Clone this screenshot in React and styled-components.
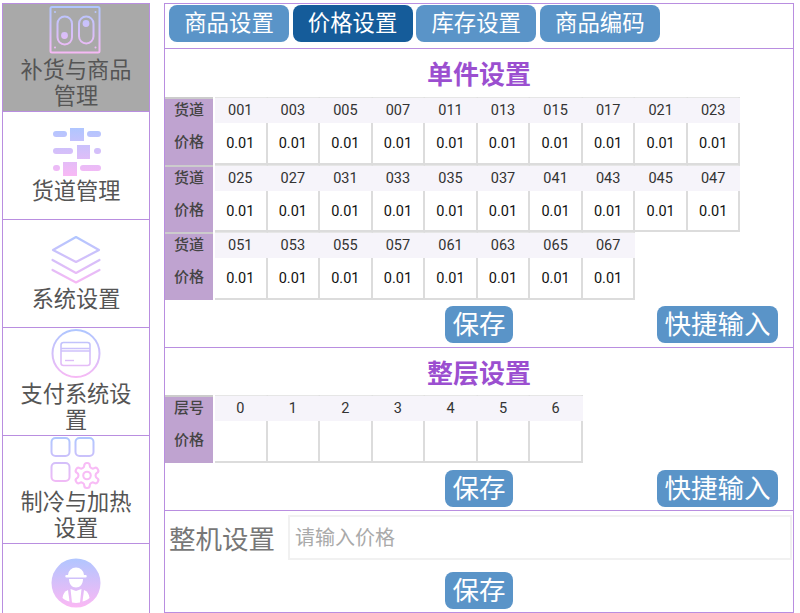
import styled, { createGlobalStyle } from 'styled-components';

const GlobalStyle = createGlobalStyle`
  html, body {
    margin: 0;
    padding: 0;
    height: 100%;
    overflow: hidden;
    background: #fff;
  }
  * {
    box-sizing: border-box;
  }
`;

const Page = styled.div`
  display: flex;
  align-items: flex-start;
  gap: 14px;
  height: 613px;
  overflow: hidden;
  padding: 3px 0 0 2px;
  font-family: Roboto, "Noto Sans CJK SC", sans-serif;
`;

const Sidebar = styled.div`
  flex: none;
  width: 148px;
  border: 1px solid #b98ee0;
`;

const NavItem = styled.div`
  height: 108px;
  display: flex;
  flex-direction: column;
  align-items: center;
  justify-content: center;
  border-bottom: 1px solid #b98ee0;
  background: ${(p) => (p.$active ? '#a9a9a9' : '#fff')};
`;

const NavIcon = styled.svg`
  flex: none;
  width: 50px;
  height: 50px;
  margin-bottom: ${(p) => p.$gap || 0}px;
  overflow: visible;
`;

const NavLabel = styled.div`
  width: 118px;
  font-size: 22.2px;
  line-height: 26px;
  text-align: center;
  color: #555;
`;

const Main = styled.div`
  flex: none;
  width: 630px;
  height: 610px;
  border: 1px solid #b98ee0;
`;

const Tabs = styled.div`
  display: flex;
  gap: 3.6px;
  height: 45px;
  padding: 1px 0 0 4px;
  border-bottom: 1px solid #b98ee0;
`;

const Tab = styled.div`
  width: 120px;
  height: 37px;
  border-radius: 8px;
  font-size: 22.4px;
  line-height: 37px;
  text-align: center;
  color: #fff;
  background: ${(p) => (p.$active ? '#155c9a' : '#5a94c8')};
`;

const Section = styled.div`
  height: ${(p) => p.$height}px;
  border-bottom: 1px solid #b98ee0;
`;

const Title = styled.div`
  height: ${(p) => p.$height}px;
  font-size: 26px;
  font-weight: 700;
  line-height: ${(p) => p.$line}px;
  text-align: center;
  color: #9b4fd0;
`;

const Row = styled.div`
  display: flex;
  height: 67.5px;
`;

const RowHead = styled.div`
  flex: none;
  width: 48px;
  margin-right: 2px;
  border-top: 2px solid #ccc;
  background: #bfa3d0;
  font-size: 15px;
  font-weight: 500;
  text-align: center;
  color: #444;
`;

const RowHeadLine = styled.div`
  height: ${(p) => p.$h}px;
  line-height: ${(p) => p.$h}px;
`;

const Cell = styled.div`
  flex: none;
  width: 52.55px;
  border-top: 1px solid #e6e6e6;
  border-right: 2px solid #dcdcdc;
  border-bottom: 2px solid #dcdcdc;
`;

const CellHead = styled.div`
  height: 25px;
  margin-right: -2px;
  padding-right: 2px;
  background: #f6f4fa;
  font-size: 14.5px;
  line-height: 26px;
  text-align: center;
  color: #333;
`;

const CellValue = styled.div`
  height: 39px;
  font-size: 14.5px;
  line-height: 41px;
  text-align: center;
  color: #111;
`;

const Actions = styled.div`
  display: grid;
  grid-template-columns: 1fr auto 1fr;
  align-items: center;
  padding-top: ${(p) => p.$top}px;
`;

const Button = styled.div`
  grid-column: ${(p) => p.$col};
  justify-self: ${(p) => (p.$col === 3 ? 'end' : 'center')};
  height: 37px;
  margin-right: ${(p) => (p.$col === 3 ? '15px' : '0')};
  padding: 0 7.5px;
  border-radius: 8px;
  font-size: 26.5px;
  line-height: 37px;
  color: #fff;
  background: #5a94c8;
`;

const WholeRow = styled.div`
  display: flex;
  align-items: center;
  height: 49px;
  padding: 4px 1px 0 4px;
`;

const WholeLabel = styled.div`
  flex: none;
  width: 119px;
  font-size: 26.5px;
  color: #777;
`;

const PriceInput = styled.input`
  flex: 1;
  min-width: 0;
  height: 45px;
  padding: 0 5px;
  border: 2px solid #f1f1f1;
  font-family: inherit;
  font-size: 20px;
  outline: none;
  &::placeholder {
    color: #aaa;
  }
`;

const channelRows = [
  ['001', '003', '005', '007', '011', '013', '015', '017', '021', '023'],
  ['025', '027', '031', '033', '035', '037', '041', '043', '045', '047'],
  ['051', '053', '055', '057', '061', '063', '065', '067'],
];

const layers = ['0', '1', '2', '3', '4', '5', '6'];

function GridRow({ head, items, value }) {
  return (
    <Row>
      <RowHead>
        <RowHeadLine $h={23}>{head}</RowHeadLine>
        <RowHeadLine $h={40}>价格</RowHeadLine>
      </RowHead>
      {items.map((item) => (
        <Cell key={item}>
          <CellHead>{item}</CellHead>
          <CellValue>{value}</CellValue>
        </Cell>
      ))}
    </Row>
  );
}

function IconGradient({ id }) {
  return (
    <defs>
      <linearGradient id={id} gradientUnits="userSpaceOnUse" x1="0" y1="0" x2="0" y2="50">
        <stop offset="0" stopColor="#b0c6ff" />
        <stop offset="1" stopColor="#fcb8f4" />
      </linearGradient>
    </defs>
  );
}

function SlotIcon() {
  return (
    <NavIcon viewBox="0 0 50 50" fill="none">
      <IconGradient id="g1" />
      <g stroke="url(#g1)" strokeWidth="2">
        <rect x="-0.5" y="0" width="49" height="45.5" rx="1.5" />
        <rect x="6.5" y="9.5" width="14.5" height="28" rx="7.2" />
        <rect x="28" y="9.5" width="14.5" height="27" rx="7.2" />
      </g>
      <g fill="url(#g1)">
        <circle cx="13.5" cy="28.5" r="3.4" />
        <circle cx="35" cy="16.5" r="3.4" />
        <circle cx="4" cy="5" r="1" />
        <circle cx="44.5" cy="5" r="1" />
        <circle cx="4" cy="40.5" r="1" />
        <circle cx="44.5" cy="40.5" r="1" />
      </g>
    </NavIcon>
  );
}

function ChannelIcon() {
  return (
    <NavIcon viewBox="0 0 50 50">
      <IconGradient id="g2" />
      <g fill="url(#g2)">
        <rect x="2" y="3" width="14" height="6" rx="3" />
        <rect x="19" y="0" width="14" height="13" />
        <rect x="36" y="3" width="14" height="6" rx="3" />
        <rect x="2" y="20" width="20" height="6" rx="3" />
        <rect x="26" y="17" width="13" height="14" />
        <rect x="43" y="20" width="7" height="6" rx="3" />
        <rect x="2" y="37" width="7" height="6" rx="3" />
        <rect x="12" y="34" width="14" height="14" />
        <rect x="29" y="37" width="21" height="6" rx="3" />
      </g>
    </NavIcon>
  );
}

function LayersIcon() {
  return (
    <NavIcon viewBox="0 0 50 50" fill="none">
      <IconGradient id="g3" />
      <g stroke="url(#g3)" strokeWidth="2.2" strokeLinejoin="round" strokeLinecap="round">
        <path d="M25 1 L48 14 L25 26 L2 14 Z" />
        <path d="M1.5 24 L25 37 L48.5 24" />
        <path d="M1.5 34 L25 46.5 L48.5 34" />
      </g>
    </NavIcon>
  );
}

function PayIcon() {
  return (
    <NavIcon viewBox="0 0 50 50" fill="none">
      <IconGradient id="g4" />
      <g stroke="url(#g4)">
        <circle cx="25" cy="22.5" r="23.5" strokeWidth="2" />
        <rect x="10" y="11.5" width="29" height="23" rx="2.5" strokeWidth="1.6" />
        <path d="M10 17.5 H39 M10 20 H39" strokeWidth="1.6" />
        <path d="M14 29.5 H23" strokeWidth="1.4" />
      </g>
    </NavIcon>
  );
}

function CoolIcon() {
  return (
    <NavIcon viewBox="0 0 50 50" fill="none">
      <IconGradient id="g5" />
      <g stroke="url(#g5)" strokeWidth="2">
        <rect x="0.5" y="-1" width="18" height="18" rx="4" />
        <rect x="24.500" y="-1" width="18" height="18" rx="4" />
        <rect x="0.5" y="24" width="18" height="18" rx="4" />
      </g>
      <g stroke="#f8bcf6" strokeWidth="1.7" transform="translate(21 21.5) scale(1.25)">
        <path d="M12.22 2h-.44a2 2 0 0 0-2 2v.18a2 2 0 0 1-1 1.73l-.43.25a2 2 0 0 1-2 0l-.15-.08a2 2 0 0 0-2.73.73l-.22.38a2 2 0 0 0 .73 2.73l.15.1a2 2 0 0 1 1 1.72v.51a2 2 0 0 1-1 1.74l-.15.09a2 2 0 0 0-.73 2.73l.22.38a2 2 0 0 0 2.73.73l.15-.08a2 2 0 0 1 2 0l.43.25a2 2 0 0 1 1 1.73V20a2 2 0 0 0 2 2h.44a2 2 0 0 0 2-2v-.18a2 2 0 0 1 1-1.73l.43-.25a2 2 0 0 1 2 0l.15.08a2 2 0 0 0 2.73-.73l.22-.39a2 2 0 0 0-.73-2.73l-.15-.08a2 2 0 0 1-1-1.74v-.5a2 2 0 0 1 1-1.74l.15-.09a2 2 0 0 0 .73-2.73l-.22-.38a2 2 0 0 0-2.73-.73l-.15.08a2 2 0 0 1-2 0l-.43-.25a2 2 0 0 1-1-1.73V4a2 2 0 0 0-2-2z" />
        <circle cx="12" cy="12" r="3" />
      </g>
    </NavIcon>
  );
}

function WorkerIcon() {
  return (
    <NavIcon viewBox="0 0 50 50" $gap={4}>
      <IconGradient id="g6" />
      <circle cx="25" cy="25" r="24.5" fill="url(#g6)" />
      <g fill="#fff">
        <path d="M17 17 a8 7.5 0 0 1 16 0 h1.5 a1 1 0 0 1 0 2.5 h-19 a1 1 0 0 1 0 -2.5 Z" />
        <path d="M18 21 h14 c0 5 -3 8.5 -7 8.5 s-7 -3.5 -7 -8.5 Z" />
        <path d="M17 32 l1.5 11.5 c-2.5 -.5 -5 -1.5 -7 -3.5 c.5 -4 2 -6.5 5.5 -8 Z" />
        <path d="M19.5 31 l5.5 2 l5.5 -2 l-1.5 13.5 c-2.5 .5 -5.5 .5 -8 0 Z" />
        <path d="M33 32 l-1.5 11.5 c2.5 -.5 5 -1.5 7 -3.5 c-.5 -4 -2 -6.5 -5.5 -8 Z" />
      </g>
    </NavIcon>
  );
}

const navItems = [
  { icon: <SlotIcon />, label: '补货与商品管理', active: true },
  { icon: <ChannelIcon />, label: '货道管理' },
  { icon: <LayersIcon />, label: '系统设置' },
  { icon: <PayIcon />, label: '支付系统设置' },
  { icon: <CoolIcon />, label: '制冷与加热设置' },
  { icon: <WorkerIcon />, label: '技术支持' },
];

const tabs = ['商品设置', '价格设置', '库存设置', '商品编码'];

export default function App() {
  return (
    <>
      <GlobalStyle />
      <Page>
        <Sidebar>
          {navItems.map((item) => (
            <NavItem key={item.label} $active={item.active}>
              {item.icon}
              <NavLabel>{item.label}</NavLabel>
            </NavItem>
          ))}
        </Sidebar>
        <Main>
          <Tabs>
            {tabs.map((tab) => (
              <Tab key={tab} $active={tab === '价格设置'}>{tab}</Tab>
            ))}
          </Tabs>
          <Section $height={299}>
            <Title $height={48} $line={52}>单件设置</Title>
            {channelRows.map((items) => (
              <GridRow key={items[0]} head="货道" items={items} value="0.01" />
            ))}
            <Actions $top={6.5}>
              <Button $col={2}>保存</Button>
              <Button $col={3}>快捷输入</Button>
            </Actions>
          </Section>
          <Section $height={163}>
            <Title $height={47} $line={52}>整层设置</Title>
            <GridRow head="层号" items={layers} value="" />
            <Actions $top={7.5}>
              <Button $col={2}>保存</Button>
              <Button $col={3}>快捷输入</Button>
            </Actions>
          </Section>
          <WholeRow>
            <WholeLabel>整机设置</WholeLabel>
            <PriceInput placeholder="请输入价格" />
          </WholeRow>
          <Actions $top={12}>
            <Button $col={2}>保存</Button>
          </Actions>
        </Main>
      </Page>
    </>
  );
}
